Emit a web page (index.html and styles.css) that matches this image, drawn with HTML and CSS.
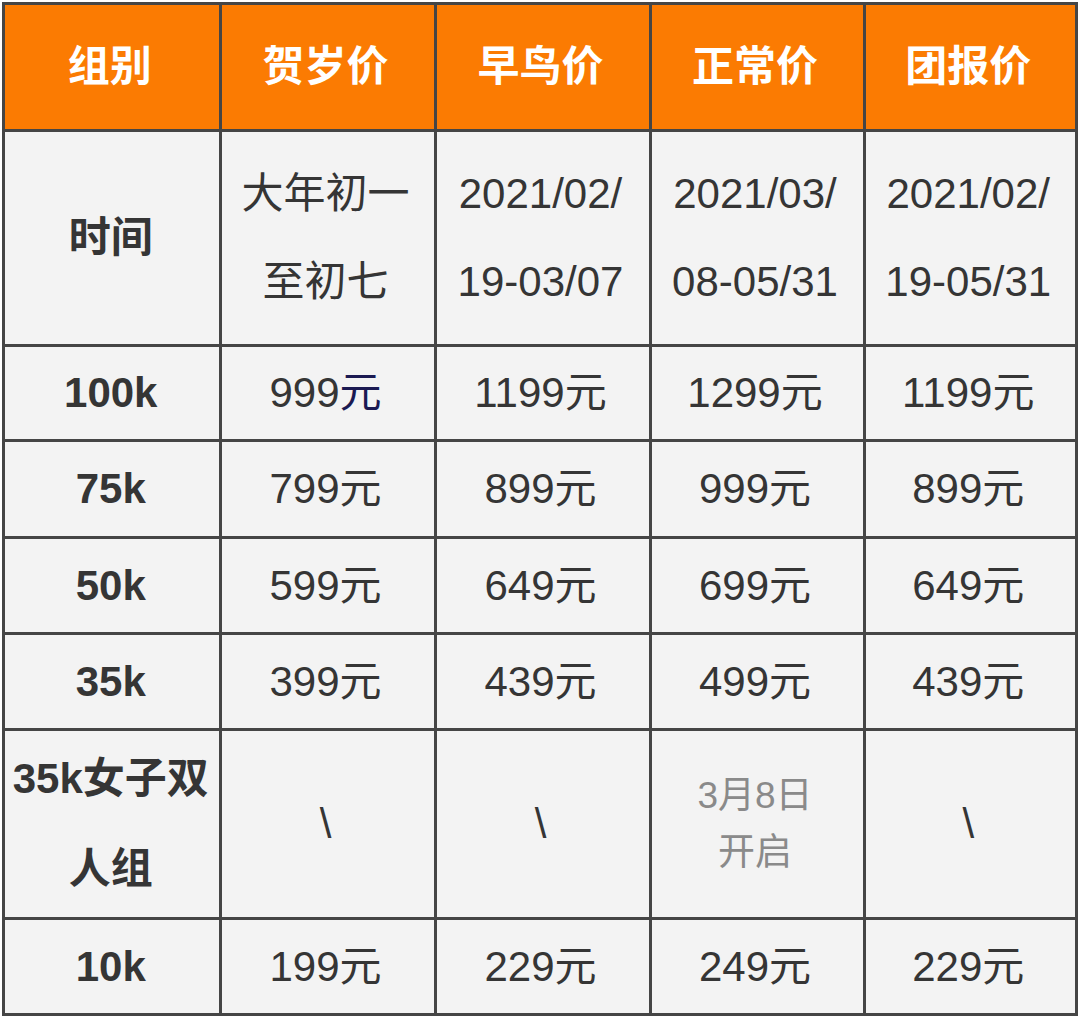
FILE: index.html
```html
<!DOCTYPE html>
<html lang="zh">
<head>
<meta charset="utf-8">
<title>价格表</title>
<link rel="stylesheet" href="styles.css">
</head>
<body>
<div class="table">
  <div class="cell head">组别</div>
  <div class="cell head">贺岁价</div>
  <div class="cell head">早鸟价</div>
  <div class="cell head">正常价</div>
  <div class="cell head">团报价</div>

  <div class="cell label">时间</div>
  <div class="cell tall">大年初一<br>至初七</div>
  <div class="cell tall">2021/02/<br>19-03/07</div>
  <div class="cell tall">2021/03/<br>08-05/31</div>
  <div class="cell tall">2021/02/<br>19-05/31</div>

  <div class="cell label">100k</div>
  <div class="cell">999<span class="navy">元</span></div>
  <div class="cell">1199元</div>
  <div class="cell">1299元</div>
  <div class="cell">1199元</div>

  <div class="cell label">75k</div>
  <div class="cell">799元</div>
  <div class="cell">899元</div>
  <div class="cell">999元</div>
  <div class="cell">899元</div>

  <div class="cell label">50k</div>
  <div class="cell">599元</div>
  <div class="cell">649元</div>
  <div class="cell">699元</div>
  <div class="cell">649元</div>

  <div class="cell label">35k</div>
  <div class="cell">399元</div>
  <div class="cell">439元</div>
  <div class="cell">499元</div>
  <div class="cell">439元</div>

  <div class="cell label tall2">35k女子双<br>人组</div>
  <div class="cell">\</div>
  <div class="cell">\</div>
  <div class="cell note">3月8日<br>开启</div>
  <div class="cell">\</div>

  <div class="cell label">10k</div>
  <div class="cell">199元</div>
  <div class="cell">229元</div>
  <div class="cell">249元</div>
  <div class="cell">229元</div>
</div>
</body>
</html>
```
FILE: styles.css
```css
html, body {
  margin: 0;
  padding: 0;
  background: #ffffff;
}
body {
  padding: 2px 0 0 2px;
}
.table {
  width: 1076px;
  box-sizing: border-box;
  display: grid;
  grid-template-columns: 213.5px 212px 212px 211px 209.5px;
  grid-template-rows: 124px 212px 92px 94px 93px 93px 186px 93px;
  gap: 3px;
  padding: 3px;
  background: #454545;
  font-family: "Liberation Sans", "Noto Sans CJK SC", sans-serif;
}
.cell {
  background: #f3f3f3;
  color: #353535;
  font-size: 42px;
  line-height: 48px;
  display: flex;
  align-items: center;
  justify-content: center;
  text-align: center;
  white-space: nowrap;
  padding-right: 4px;
}
.head {
  background: #fb7b02;
  color: #ffffff;
  font-weight: bold;
  font-size: 42px;
}
.label {
  font-weight: bold;
  padding-right: 2px;
}
.tall {
  line-height: 88px;
}
.tall2 {
  line-height: 90px;
}
.note {
  color: #8a8a8a;
  font-size: 37px;
  line-height: 57px;
}
.navy {
  color: #1b1a52;
}
```
